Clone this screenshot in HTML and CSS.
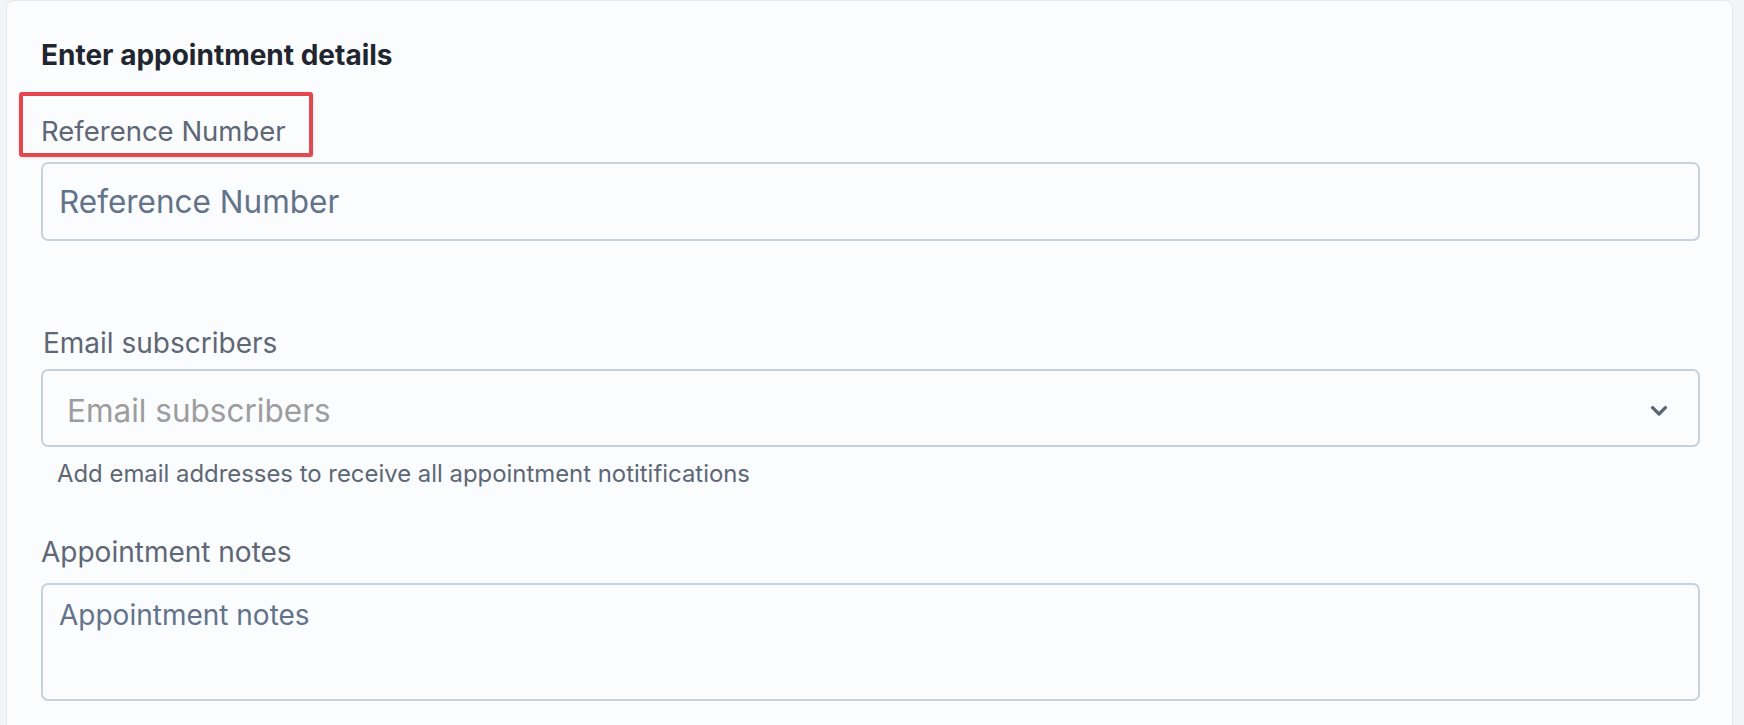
FILE: index.html
```html
<!DOCTYPE html>
<html lang="en">
<head>
    <meta charset="UTF-8">
    <meta name="viewport" content="width=device-width, initial-scale=1.0">
    <title>Appointment details</title>
    <link rel="stylesheet" href="styles.css">
</head>
<body>

    <div class="page">
        <form class="card">
            <h2 class="card-title">Enter appointment details</h2>

            <!-- Reference number (highlighted label) -->
            <div class="field">
                <label class="field-label highlighted" for="referenceNumber">Reference Number</label>
                <input class="text-input" id="referenceNumber" type="text" placeholder="Reference Number">
            </div>

            <!-- Email subscribers picker -->
            <div class="field field-select">
                <label class="field-label">Email subscribers</label>
                <div class="select" role="combobox" aria-expanded="false">
                    <span class="select-placeholder">Email subscribers</span>
                    <svg class="chevron" width="18" height="11" viewBox="0 0 18 11" aria-hidden="true">
                        <polyline points="1.6,1.6 9,9 16.4,1.6" fill="none" stroke="#5b6573" stroke-width="3.2" stroke-linejoin="round"/>
                    </svg>
                </div>
                <p class="field-help">Add email addresses to receive all appointment notitifications</p>
            </div>

            <!-- Notes -->
            <div class="field field-notes">
                <label class="field-label" for="appointmentNotes">Appointment notes</label>
                <textarea class="text-area" id="appointmentNotes" placeholder="Appointment notes"></textarea>
            </div>
        </form>
    </div>

</body>
</html>
```

FILE: styles.css
```css
body {
    margin: 0;
    background-color: #f2f5f8;
    font-family: Inter, "Noto Sans", sans-serif;
}

.page {
    padding: 0 11px 0 6px;
}

.card {
    background-color: #fbfcfd;
    border: 1px solid #e4e9ef;
    border-radius: 8px;
    padding: 37px 32px 60px 34px;
}

.card-title {
    margin: 0 0 42px;
    font-size: 28px;
    line-height: 34px;
    font-weight: 700;
    color: #1f2630;
}

.field-label {
    display: block;
    width: fit-content;
    margin-bottom: 14px;
    font-size: 28px;
    line-height: 34px;
    color: #5d6775;
}

/* red annotation box around the label */
.highlighted {
    position: relative;
    font-size: 27.5px;
}

.highlighted::after {
    content: "";
    position: absolute;
    left: -22px;
    top: -22px;
    width: 294px;
    height: 65px;
    box-sizing: border-box;
    border: 4px solid #e4484e;
    border-radius: 3px;
    box-shadow: 0 1px 3px rgba(0, 0, 0, 0.12);
}

.text-input {
    display: block;
    width: 100%;
    height: 79px;
    box-sizing: border-box;
    padding: 0 16px;
    border: 2px solid #c8d2dd;
    border-radius: 7px;
    background: transparent;
    font-family: inherit;
    font-size: 31.5px;
    color: #1f2630;
    outline: none;
}

.text-input::placeholder,
.text-area::placeholder {
    color: #62738a;
    opacity: 1;
}

.field-select {
    margin-top: 85px;
}

.field-select .field-label {
    margin-left: 2px;
    margin-bottom: 9px;
}

.select {
    display: flex;
    align-items: center;
    justify-content: space-between;
    height: 78px;
    box-sizing: border-box;
    padding: 4px 30px 0 24px;
    border: 2px solid #c8d2dd;
    border-radius: 7px;
}

.select-placeholder {
    font-size: 31.5px;
    color: #9d9d9f;
}

.field-help {
    margin: 12px 0 0 16px;
    font-size: 23.9px;
    line-height: 30px;
    color: #5d6775;
}

.field-notes {
    margin-top: 46px;
}

.text-area {
    display: block;
    width: 100%;
    height: 118px;
    box-sizing: border-box;
    padding: 13px 16px;
    border: 2px solid #c8d2dd;
    border-radius: 7px;
    background: transparent;
    font-family: inherit;
    font-size: 28px;
    line-height: 34px;
    color: #1f2630;
    resize: none;
    outline: none;
}
```
